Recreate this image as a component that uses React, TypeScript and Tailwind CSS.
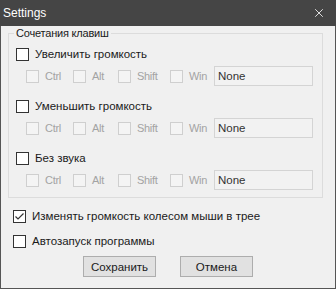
import { X } from "lucide-react";
import clsx from "clsx";

function Box({ checked, disabled }: { checked?: boolean; disabled?: boolean }) {
  return (
    <span
      className={clsx(
        "w-[13px] h-[13px] shrink-0 border flex items-center justify-center",
        disabled ? "border-[#cfcfcf] bg-[#f4f4f4]" : "border-[#333333] bg-white"
      )}
    >
      {checked && (
        <svg width="11" height="11" viewBox="0 0 11 11">
          <path d="M1.5 5.5 L4 8 L9.5 2.5" fill="none" stroke="#333" strokeWidth="1.2" />
        </svg>
      )}
    </span>
  );
}

function Check({ label, checked, className }: { label: string; checked?: boolean; className?: string }) {
  return (
    <div className={clsx("flex items-center h-[20px] gap-[6px]", className)}>
      <Box checked={checked} />
      <span className="text-[#1a1a1a]">{label}</span>
    </div>
  );
}

function Mod({ name, w }: { name: string; w: string }) {
  return (
    <div className={clsx("flex items-center gap-[6px]", w)}>
      <Box disabled />
      <span className="text-[#a3a3a3] text-[11px] tracking-[-0.3px]">{name}</span>
    </div>
  );
}

function Hotkey({ label, className }: { label: string; className?: string }) {
  return (
    <div className={className}>
      <Check label={label} className="pl-[7px]" />
      <div className="flex items-center h-[20px] mt-[2px] pl-[17px]">
        <Mod name="Ctrl" w="w-[47px]" />
        <Mod name="Alt" w="w-[45px]" />
        <Mod name="Shift" w="w-[52px]" />
        <Mod name="Win" w="w-[44px]" />
        <div className="w-[99px] h-[20px] border border-[#d4d4d4] bg-[#f2f2f2] flex items-center pl-[3px] text-[#333333]">
          None
        </div>
      </div>
    </div>
  );
}

export default function App() {
  return (
    <div className="w-[336px] h-[289px] bg-[#f0f0f0] border-x border-b border-[#555555] flex flex-col font-['Liberation_Sans',Arial,sans-serif] text-[11.5px] leading-[14px] select-none">
      <div className="h-[26px] -mx-px bg-[#454545] flex items-center justify-between pl-[3px] pr-[10px] shrink-0">
        <span className="text-white text-[12px]">Settings</span>
        <X size={14} strokeWidth={1.4} className="text-white" />
      </div>

      <fieldset className="ml-[7px] w-[315px] border border-[#dcdcdc] pb-[7px]">
        <legend className="ml-[5px] px-[2px] text-[#1a1a1a] text-[11px] tracking-[-0.2px]">Сочетания клавиш</legend>
        <Hotkey label="Увеличить громкость" className="mt-[4px]" />
        <Hotkey label="Уменьшить громкость" className="mt-[10px]" />
        <Hotkey label="Без звука" className="mt-[10px]" />
      </fieldset>

      <Check label="Изменять громкость колесом мыши в трее" checked className="pl-[12px] mt-[8px]" />
      <Check label="Автозапуск программы" className="pl-[12px] mt-[5px]" />

      <div className="flex gap-[24px] pl-[82px] mt-[5px]">
        <button className="w-[73px] h-[21px] bg-[#e1e1e1] border border-[#adadad] text-[#1a1a1a]">
          Сохранить
        </button>
        <button className="w-[73px] h-[21px] bg-[#e1e1e1] border border-[#adadad] text-[#1a1a1a]">
          Отмена
        </button>
      </div>
    </div>
  );
}
